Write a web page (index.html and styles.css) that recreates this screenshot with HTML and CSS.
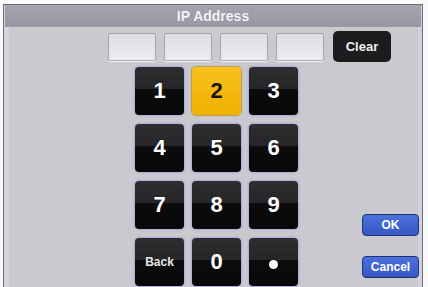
FILE: index.html
```html
<!DOCTYPE html>
<html>
<head>
<meta charset="utf-8">
<link rel="stylesheet" href="styles.css">
</head>
<body>
<div class="frame">
  <div class="titlebar">IP Address</div>
  <div class="body">
    <div class="inputs">
      <div class="field"></div>
      <div class="field"></div>
      <div class="field"></div>
      <div class="field"></div>
      <div class="clear">Clear</div>
    </div>
    <div class="lower">
      <div class="keypad">
        <div class="key">1</div>
        <div class="key active">2</div>
        <div class="key">3</div>
        <div class="key">4</div>
        <div class="key">5</div>
        <div class="key">6</div>
        <div class="key">7</div>
        <div class="key">8</div>
        <div class="key">9</div>
        <div class="key small">Back</div>
        <div class="key">0</div>
        <div class="key"><span class="dot"></span></div>
      </div>
      <div class="actions">
        <div class="btn">OK</div>
        <div class="btn">Cancel</div>
      </div>
    </div>
  </div>
</div>
</body>
</html>
```
FILE: styles.css
```css
html, body {
  margin: 0;
  padding: 0;
  background: #fafafa;
  font-family: "Liberation Sans", Arial, sans-serif;
}
.frame {
  margin: 4px 0 0 3px;
  width: 420px;
  height: 283px;
  border: 1px solid #6e6c78;
  border-bottom: none;
  background: #c9c9ce;
  box-shadow: inset 5px 0 0 #d6d4e2, inset -4px 0 0 #d2d0de;
  overflow: hidden;
  box-sizing: border-box;
}
.titlebar {
  height: 22px;
  margin: 0 1px;
  background: linear-gradient(#a4a3ae, #9897a3);
  color: #f4f4f6;
  font-weight: bold;
  font-size: 14px;
  line-height: 22px;
  text-align: center;
  text-shadow: 0 0 1px #8a8a94;
}
.body {
  display: flex;
  flex-direction: column;
}
.inputs {
  display: flex;
  align-items: center;
  margin: 4px 0 0 104px;
  height: 31px;
}
.field {
  width: 48px;
  height: 28px;
  box-sizing: border-box;
  margin-right: 8px;
  background: linear-gradient(#dcdee2, #eceef0);
  border: 1px solid #a4a6aa;
  border-radius: 2px;
  box-shadow: 0 1px 0 #f6f6f8;
}
.clear {
  margin-left: 1px;
  width: 58px;
  height: 31px;
  background: #1c1c1e;
  border-radius: 5px;
  color: #f0f0f0;
  font-weight: bold;
  font-size: 13px;
  line-height: 31px;
  text-align: center;
}
.lower {
  display: flex;
  margin-top: 5px;
}
.keypad {
  margin-left: 131px;
  display: grid;
  grid-template-columns: repeat(3, 49px);
  grid-auto-rows: 48px;
  column-gap: 8px;
  row-gap: 9px;
}
.key {
  display: flex;
  align-items: center;
  justify-content: center;
  background: linear-gradient(#2e2e30 0%, #262628 45%, #0c0c0c 46%, #080808 100%);
  border-radius: 4px;
  box-shadow: 0 0 2px 1px #aca6dc;
  color: #ffffff;
  font-weight: bold;
  font-size: 22px;
}
.key.active {
  background: linear-gradient(#f8c21c, #f0b000);
  color: #1a1408;
  box-shadow: 0 0 1px 1px #b89a52;
}
.key.small {
  font-size: 12px;
  color: #e8e8e8;
}
.dot {
  width: 9px;
  height: 9px;
  border-radius: 50%;
  background: #ffffff;
  margin-top: 4px;
}
.actions {
  margin-left: 64px;
  display: flex;
  flex-direction: column;
  justify-content: flex-end;
  gap: 20px;
  padding-bottom: 8px;
}
.btn {
  width: 57px;
  height: 22px;
  background: linear-gradient(#4d72dc, #3557c4);
  border: 1px solid #1e3276;
  border-radius: 4px;
  box-sizing: border-box;
  color: #ffffff;
  font-weight: bold;
  font-size: 12px;
  line-height: 20px;
  text-align: center;
}
```
